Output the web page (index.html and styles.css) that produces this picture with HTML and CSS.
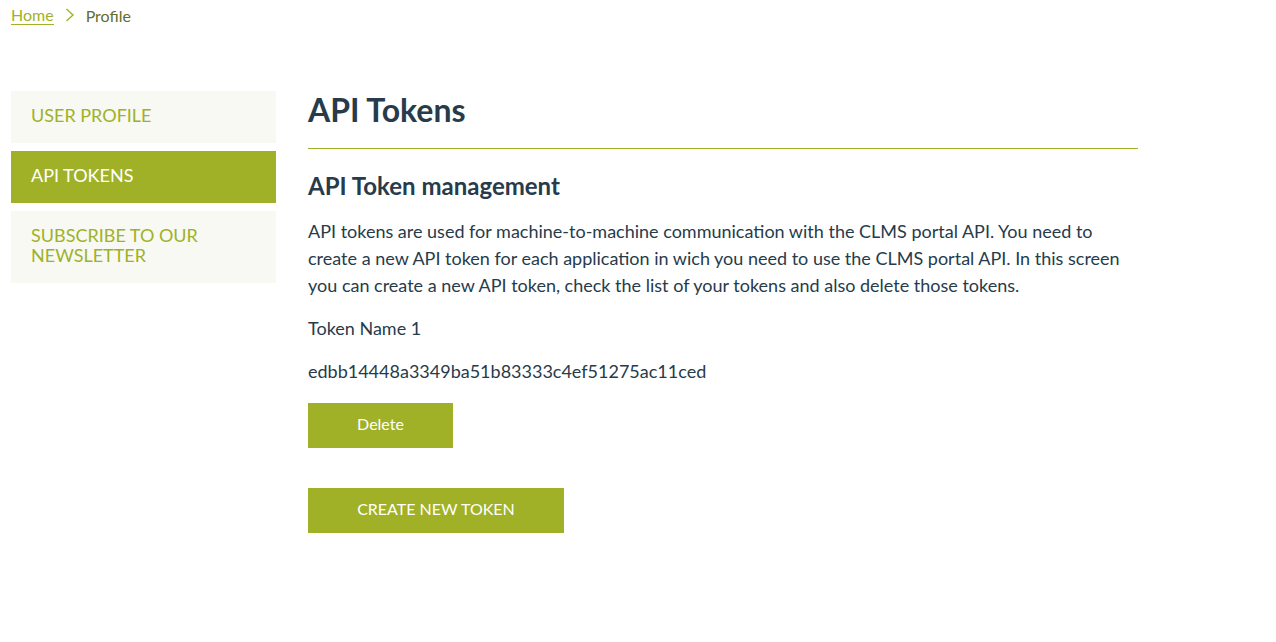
FILE: index.html
```html
<!DOCTYPE html>
<html lang="en">
<head>
<meta charset="utf-8">
<title>Profile - API Tokens</title>
<link rel="stylesheet" href="styles.css">
</head>
<body>
<div class="page">
  <nav class="breadcrumb">
    <a class="crumb-link" href="#">Home</a>
    <svg class="crumb-sep" width="12" height="16" viewBox="0 0 12 16" aria-hidden="true"><path d="M2.5 2 L9 8 L2.5 14" fill="none" stroke="#a0b128" stroke-width="1.4"/></svg>
    <span class="crumb-current">Profile</span>
  </nav>
  <div class="layout">
    <aside class="sidebar">
      <a class="side-item" href="#">USER PROFILE</a>
      <a class="side-item active" href="#">API TOKENS</a>
      <a class="side-item" href="#">SUBSCRIBE TO OUR NEWSLETTER</a>
    </aside>
    <main class="content">
      <h1 class="title">API Tokens</h1>
      <div class="rule"></div>
      <h2 class="subtitle">API Token management</h2>
      <p class="text">API tokens are used for machine-to-machine communication with the CLMS portal API. You need to create a new API token for each application in wich you need to use the CLMS portal API. In this screen you can create a new API token, check the list of your tokens and also delete those tokens.</p>
      <p class="token-name">Token Name 1</p>
      <p class="token-value">edbb14448a3349ba51b83333c4ef51275ac11ced</p>
      <button class="btn btn-delete">Delete</button>
      <button class="btn btn-create">CREATE NEW TOKEN</button>
    </main>
  </div>
</div>
</body>
</html>
```
FILE: styles.css
```css
* { box-sizing: border-box; }
body {
  margin: 0;
  font-family: Lato, "Open Sans", sans-serif;
  color: #273b4b;
  background: #fff;
}
.page {
  padding: 4px 11px 0 11px;
}
.breadcrumb {
  display: flex;
  align-items: center;
  font-size: 16px;
  height: 22px;
}
.crumb-link {
  color: #a0b128;
  text-decoration: none;
  border-bottom: 1px solid #a0b128;
  line-height: 19px;
}
.crumb-sep {
  margin: 0 10px 0 10px;
}
.crumb-current {
  color: #646d2c;
}
.layout {
  display: flex;
  gap: 32px;
  margin-top: 65px;
}
.sidebar {
  width: 265px;
  flex: none;
  display: flex;
  flex-direction: column;
  gap: 8px;
}
.side-item {
  display: block;
  background: #f8f9f2;
  color: #a0b128;
  text-decoration: none;
  font-size: 18px;
  line-height: 20px;
  padding: 14px 20px 18px;
}
.side-item.active {
  background: #a0b128;
  color: #fff;
}
.side-item:last-child {
  padding-top: 14px;
  padding-bottom: 18px;
}
.content {
  width: 830px;
}
.title {
  margin: 0;
  font-size: 32px;
  font-weight: 700;
  line-height: 38px;
}
.rule {
  height: 1px;
  background: #a0b128;
  margin-top: 19px;
}
.subtitle {
  margin: 22px 0 0;
  font-size: 24px;
  font-weight: 700;
  line-height: 30px;
}
.text {
  margin: 17px 0 0;
  font-size: 18px;
  line-height: 27px;
}
.token-name {
  margin: 16px 0 0;
  font-size: 18px;
  line-height: 27px;
}
.token-value {
  margin: 16px 0 0;
  font-size: 18px;
  line-height: 27px;
}
.btn {
  display: block;
  border: 0;
  padding: 0 0 4px;
  background: #a0b128;
  color: #fff;
  font-family: Lato, "Open Sans", sans-serif;
  font-size: 16px;
  height: 45px;
  cursor: pointer;
}
.btn-delete {
  width: 145px;
  margin-top: 18px;
}
.btn-create {
  width: 256px;
  margin-top: 40px;
}
```
